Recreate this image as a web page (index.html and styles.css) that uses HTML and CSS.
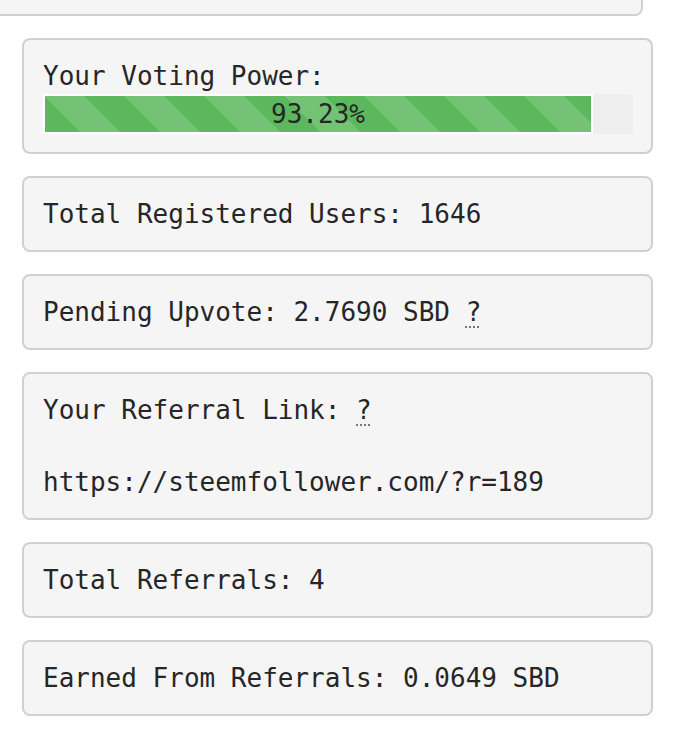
FILE: index.html
```html
<!DOCTYPE html>
<html>
<head>
<meta charset="utf-8">
<link rel="stylesheet" href="styles.css">
</head>
<body>
<div class="page">
  <div class="well prev"></div>
  <div class="stack">
    <div class="well">
      <div class="line">Your Voting Power:</div>
      <div class="progress">
        <div class="progress-bar" style="width: 93.23%">93.23%</div>
      </div>
    </div>
    <div class="well"><div class="line">Total Registered Users: 1646</div></div>
    <div class="well"><div class="line">Pending Upvote: 2.7690 SBD <abbr class="hint" title="Estimated value of your upvote">?</abbr></div></div>
    <div class="well">
      <div class="line">Your Referral Link: <abbr class="hint" title="Share this link">?</abbr><br><br>https://steemfollower.com/?r=189</div>
    </div>
    <div class="well"><div class="line">Total Referrals: 4</div></div>
    <div class="well"><div class="line">Earned From Referrals: 0.0649 SBD</div></div>
  </div>
</div>
</body>
</html>
```
FILE: styles.css
```css
html, body {
  margin: 0;
  padding: 0;
  background: #ffffff;
}
body {
  font-family: "DejaVu Sans Mono", "Liberation Mono", monospace;
  font-size: 26px;
  line-height: 36px;
  color: #262626;
  overflow: hidden;
}
.page {
  width: 678px;
}
.well {
  box-sizing: border-box;
  background: #f5f5f5;
  border: 2px solid #d0d0d0;
  border-radius: 8px;
  padding: 18px 18px 18px 19px;
}
.prev {
  height: 40px;
  margin: -24px 35px 22px -20px;
}
.stack {
  display: flex;
  flex-direction: column;
  gap: 22px;
  padding: 0 25px 0 22px;
}
.line {
  white-space: nowrap;
}
.hint {
  text-decoration: underline dotted #777;
  text-decoration-thickness: 2px;
  text-underline-offset: 5px;
  cursor: help;
}
.progress {
  height: 40px;
  background: #eeeeee;
  border-radius: 2px;
}
.progress-bar {
  box-sizing: border-box;
  height: 40px;
  border: 2px solid #ffffff;
  background-color: #5cb85c;
  background-image: linear-gradient(45deg, rgba(255,255,255,.15) 25%, transparent 25%, transparent 50%, rgba(255,255,255,.15) 50%, rgba(255,255,255,.15) 75%, transparent 75%, transparent);
  background-size: 80px 80px;
  text-align: center;
  line-height: 36px;
  color: #262626;
}
```
